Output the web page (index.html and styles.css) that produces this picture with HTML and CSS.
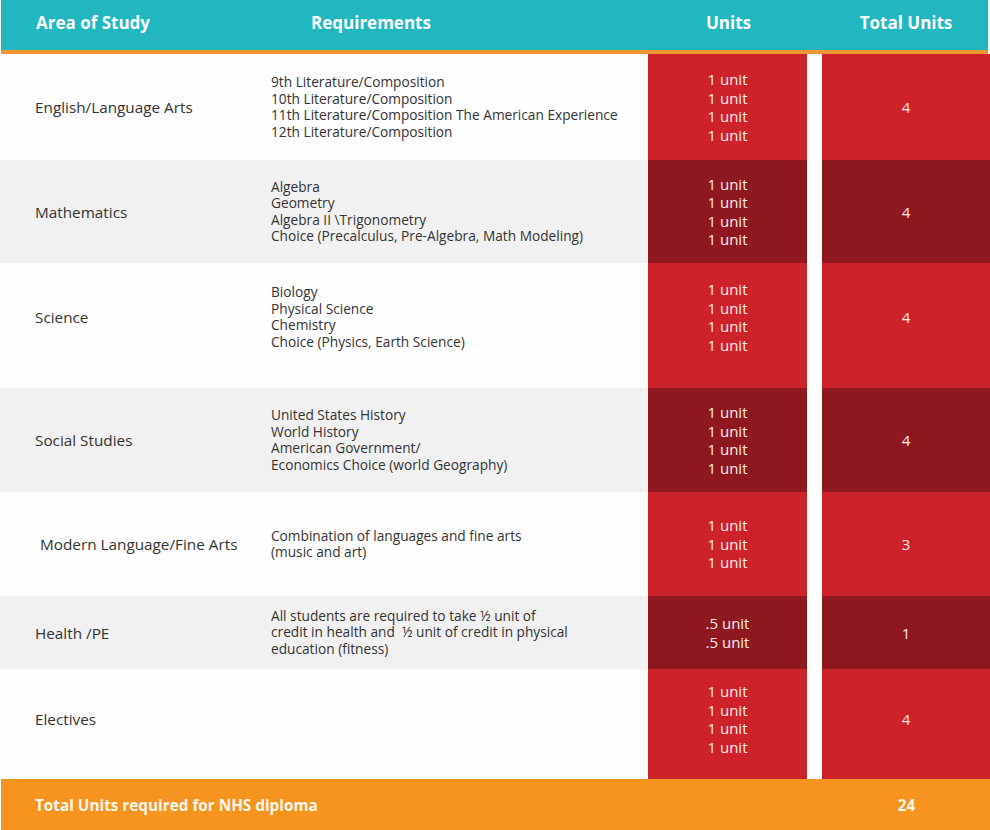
FILE: index.html
```html
<!DOCTYPE html>
<html lang="en">
<head>
<meta charset="utf-8">
<title>Graduation Requirements</title>
<link rel="stylesheet" href="styles.css">
</head>
<body>
<div class="sheet">
  <div class="head">
    <div class="h h-area">Area of Study</div>
    <div class="h h-req">Requirements</div>
    <div class="h h-units">Units</div>
    <div class="h h-total">Total Units</div>
  </div>

  <div class="row r1">
    <div class="area">English/Language Arts</div>
    <div class="req">9th Literature/Composition<br>10th Literature/Composition<br>11th Literature/Composition The American Experience<br>12th Literature/Composition</div>
    <div class="units">1 unit<br>1 unit<br>1 unit<br>1 unit</div>
    <div class="gap"></div>
    <div class="total">4</div>
  </div>

  <div class="row alt r2">
    <div class="area">Mathematics</div>
    <div class="req">Algebra<br>Geometry<br>Algebra II \Trigonometry<br>Choice (Precalculus, Pre-Algebra, Math Modeling)</div>
    <div class="units">1 unit<br>1 unit<br>1 unit<br>1 unit</div>
    <div class="gap"></div>
    <div class="total">4</div>
  </div>

  <div class="row r3">
    <div class="area">Science</div>
    <div class="req">Biology<br>Physical Science<br>Chemistry<br>Choice (Physics, Earth Science)</div>
    <div class="units">1 unit<br>1 unit<br>1 unit<br>1 unit</div>
    <div class="gap"></div>
    <div class="total">4</div>
  </div>

  <div class="row alt r4">
    <div class="area">Social Studies</div>
    <div class="req">United States History<br>World History<br>American Government/<br>Economics Choice (world Geography)</div>
    <div class="units">1 unit<br>1 unit<br>1 unit<br>1 unit</div>
    <div class="gap"></div>
    <div class="total">4</div>
  </div>

  <div class="row r5">
    <div class="area indent">Modern Language/Fine Arts</div>
    <div class="req">Combination of languages and fine arts<br>(music and art)</div>
    <div class="units">1 unit<br>1 unit<br>1 unit</div>
    <div class="gap"></div>
    <div class="total">3</div>
  </div>

  <div class="row alt r6">
    <div class="area">Health /PE</div>
    <div class="req">All students are required to take ½ unit of<br>credit in health and &nbsp;½ unit of credit in physical<br>education (fitness)</div>
    <div class="units">.5 unit<br>.5 unit</div>
    <div class="gap"></div>
    <div class="total">1</div>
  </div>

  <div class="row r7">
    <div class="area">Electives</div>
    <div class="req"></div>
    <div class="units">1 unit<br>1 unit<br>1 unit<br>1 unit</div>
    <div class="gap"></div>
    <div class="total">4</div>
  </div>

  <div class="foot">
    <div class="f-label">Total Units required for NHS diploma</div>
    <div class="f-total">24</div>
  </div>
</div>
</body>
</html>
```
FILE: styles.css
```css
html, body {
  margin: 0;
  padding: 0;
  background: #ffffff;
}

.sheet {
  width: 990px;
  font-family: "Open Sans", "Liberation Sans", sans-serif;
  font-size: 14px;
  color: #333333;
}

.head {
  display: grid;
  grid-template-columns: 271px 377px 159px 15px 166px;
  height: 50px;
  width: 987px;
  margin-left: 1px;
  background: #20b7c1;
  border-bottom: 4px solid #ef9632;
  color: #ffffff;
  font-weight: 700;
  font-size: 17px;
}

.h {
  display: flex;
  align-items: center;
  padding-bottom: 5px;
}

.h-area { padding-left: 35px; }
.h-req { padding-left: 39px; }
.h-units { grid-column: 3; justify-content: center; }
.h-total { grid-column: 5; justify-content: center; }

.row {
  display: grid;
  grid-template-columns: 271px 377px 159px 15px 168px;
}

.r1 { height: 106px; }
.r2 { height: 103px; }
.r3 { height: 125px; padding-bottom: 0; }
.r4 { height: 104px; }
.r5 { height: 104px; }
.r6 { height: 73px; }
.r7 { height: 110px; }

.area, .req, .units, .total {
  display: flex;
  align-items: center;
}

.r3 .area, .r3 .req, .r3 .units, .r3 .total {
  padding-bottom: 17px;
}

.r7 .area, .r7 .req, .r7 .units, .r7 .total {
  padding-bottom: 10px;
}

.area {
  padding-left: 35px;
  font-size: 15.3px;
  background: #fefefe;
}

.area.indent { padding-left: 40px; }

.req {
  font-size: 13.7px;
  line-height: 16.5px;
  background: #fefefe;
}

.alt .area, .alt .req {
  background: #f1f1f1;
}

.units {
  justify-content: center;
  text-align: center;
  font-size: 15px;
  line-height: 18.5px;
  background: #cc2228;
  color: #fde9ec;
}

.total {
  justify-content: center;
  font-size: 15px;
  background: #cc2228;
  color: #fde9ec;
}

.alt .units, .alt .total {
  background: #8e181d;
}

.gap { background: #ffffff; }

.foot {
  display: grid;
  grid-template-columns: 822px 168px;
  height: 51px;
  margin-left: 1px;
  background: #f7941e;
  color: #fff8ee;
  font-weight: 700;
  font-size: 15.3px;
}

.f-label {
  display: flex;
  align-items: center;
  padding-left: 34px;
}

.f-total {
  display: flex;
  align-items: center;
  justify-content: center;
  margin-left: -1px;
}
```
